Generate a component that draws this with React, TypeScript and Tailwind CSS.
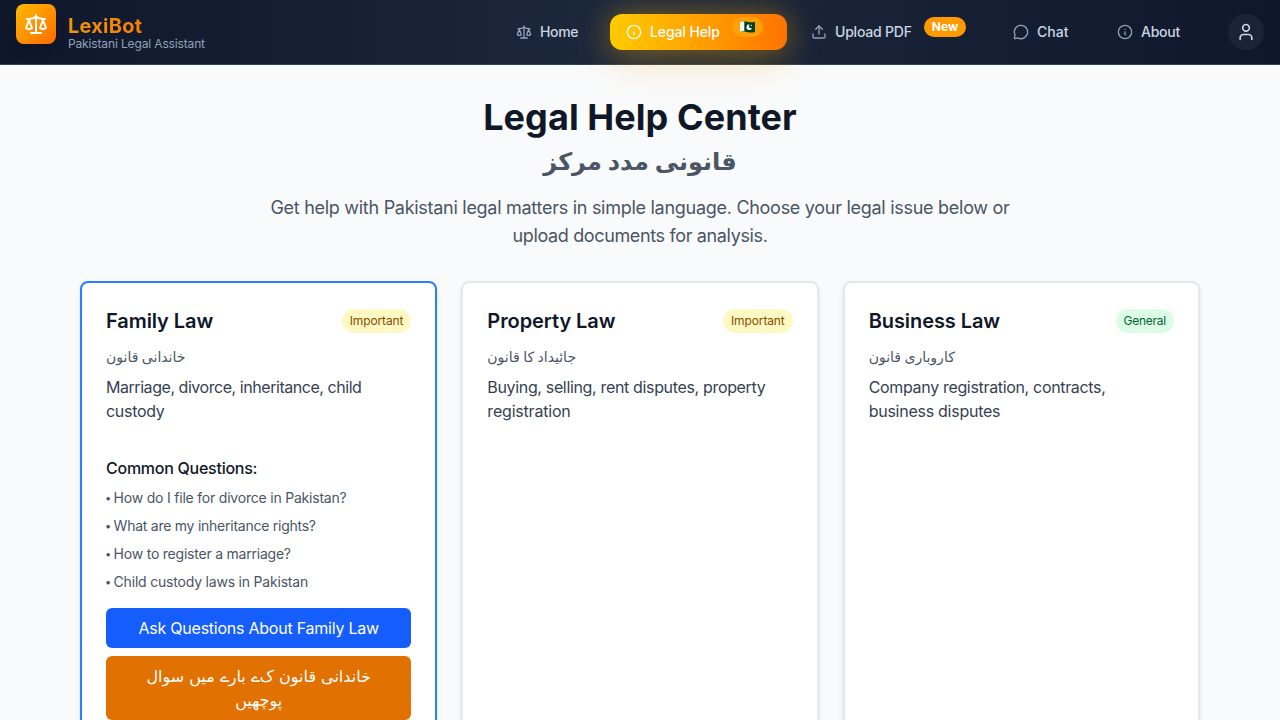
import type { ReactNode } from "react";
import { Info, MessageCircle, Scale, Upload, User } from "lucide-react";

function NavItem({ icon, label, tracking = "", children, className = "" }: { icon: ReactNode; label: string; tracking?: string; children?: ReactNode; className?: string }) {
  return (
    <a className={`flex h-9 items-center rounded-xl pl-4 text-sm font-medium text-slate-300 ${className}`}>
      <span className="mr-2 shrink-0 text-slate-400">{icon}</span>
      <span className={`whitespace-nowrap ${tracking}`}>{label}</span>
      {children}
    </a>
  );
}

function PakistanFlag() {
  return (
    <svg width="15" height="12" viewBox="0 0 15 12">
      <path d="M0 .8Q3.7-.3 7.5.8T15 .8V11Q11.300 12 7.500 11T0 11Z" fill="#01411c" />
      <path d="M0 .8Q2-.1 4.300.2V10.400Q2 10.200 0 11Z" fill="#f3f5f4" />
      <path d="M9.400 3.200A2.900 2.900 0 1 0 12 7.200 2.500 2.500 0 0 1 9.400 3.200Z" fill="#fff" />
      <circle cx="11.200" cy="4.400" r=".7" fill="#fff" />
    </svg>
  );
}

function Header() {
  return (
    <header className="flex h-[65px] border-b border-slate-700 bg-gradient-to-r from-slate-900 via-slate-800 to-slate-900">
      <div className="mt-1 ml-4 flex h-10 w-10 shrink-0 items-center justify-center rounded-lg bg-gradient-to-br from-[#ffb900] to-[#ff6900] text-white shadow-lg">
        <Scale size={24} strokeWidth={2} />
      </div>
      <div className="mt-3 ml-3 w-[432px] shrink-0">
        <div className="w-[137px] bg-gradient-to-r from-[#f0930a] to-[#ff6900] bg-clip-text text-xl leading-7 font-bold tracking-[0.22px] text-transparent">LexiBot</div>
        <div className="-mt-1 text-xs leading-4 tracking-[-0.14px] whitespace-nowrap text-slate-400">Pakistani Legal Assistant</div>
      </div>
      <nav className="mt-3.5 flex items-start">
        <NavItem className="w-[94px]" icon={<Scale size={16} />} label="Home" tracking="tracking-[-0.35px]" />
        <div className="ml-4 w-[177px] rounded-xl bg-gradient-to-r from-[#ffcb00] to-[#ff7200] shadow-[0_0_30px_rgba(255,180,0,0.32),0_10px_40px_rgba(255,165,0,0.22)]">
          <a className="flex h-9 items-center pl-4 text-sm font-medium text-white">
            <Info size={16} className="mr-2 shrink-0" />
            <span className="w-[70px] tracking-[-0.1px] whitespace-nowrap">Legal Help</span>
            <span className="mb-2.5 ml-3 flex h-5 w-[31px] items-center justify-center rounded-full bg-[#ffa005]">
              <PakistanFlag />
            </span>
          </a>
        </div>
        <NavItem className="ml-2 w-[202px]" icon={<Upload size={16} />} label="Upload PDF" tracking="tracking-[-0.2px]">
          <span className="mb-2.5 ml-3 rounded-full bg-[#fe9a00] px-2 text-xs leading-5 font-bold text-white">New</span>
        </NavItem>
        <NavItem className="w-[104px]" icon={<MessageCircle size={16} />} label="Chat" />
        <NavItem className="w-[80px]" icon={<Info size={16} />} label="About" tracking="tracking-[-0.25px]" />
      </nav>
      <button className="mt-3.5 mr-4 ml-auto flex h-9 w-9 items-center justify-center rounded-full bg-[#1a2437] text-slate-300">
        <User size={20} />
      </button>
    </header>
  );
}

function LawCard({ title, urdu, text, badge, selected, children }: { title: string; urdu: string; text: ReactNode; badge: "Important" | "General"; selected?: boolean; children?: ReactNode }) {
  return (
    <article className={`rounded-lg border-2 bg-white p-6 shadow-md ${selected ? "border-[#2b7fff]" : "border-gray-200"}`}>
      <div className="mb-3 flex items-center justify-between">
        <h2 className="text-xl leading-7 font-semibold tracking-[-0.08px] text-gray-900">{title}</h2>
        <span className={`rounded-full px-2 py-1 text-xs leading-4 ${badge === "Important" ? "bg-[#fef9c2] tracking-[-0.12px] text-[#894b00]" : "bg-[#dcfce7] tracking-[-0.26px] text-[#016630]"}`}>{badge}</span>
      </div>
      <p className="mb-2 font-['DejaVu_Sans',sans-serif] text-sm leading-5 [word-spacing:-1px] text-gray-600">{urdu}</p>
      <p className="mb-4 leading-6 text-gray-700">{text}</p>
      {children}
    </article>
  );
}

function Question({ text, tracking }: { text: string; tracking: string }) {
  return (
    <li className="flex">
      <span className="-ml-px w-[8.6px] text-[11px]">•</span>
      <span className={tracking}>{text}</span>
    </li>
  );
}

export default function App() {
  return (
    <div className="h-[720px] overflow-hidden bg-gray-50 font-['Inter','DejaVu_Sans',sans-serif]">
      <Header />
      <main className="px-20 pt-8">
        <div className="mb-[31px] text-center">
          <h1 className="mb-[9px] text-4xl leading-10 font-bold tracking-[0.07px] text-gray-900">Legal Help Center</h1>
          <h2 className="mb-4 font-['DejaVu_Sans',sans-serif] text-2xl leading-8 font-semibold [word-spacing:-2.5px] text-gray-600">قانونی مدد مرکز</h2>
          <p className="text-lg leading-7 text-gray-600">
            <span className="tracking-[-0.28px]">Get help with Pakistani legal matters in simple language. Choose your legal issue below or</span>
            <br />
            <span className="tracking-[-0.36px]">upload documents for analysis.</span>
          </p>
        </div>
        <div className="grid grid-cols-3 gap-6">
          <LawCard
            selected
            title="Family Law"
            urdu="خاندانی قانون"
            badge="Important"
            text={<><span className="tracking-[-0.45px]">Marriage, divorce, inheritance, child</span><br /><span className="tracking-[-0.3px]">custody</span></>}
          >
            <h3 className="mt-[33px] mb-2 leading-6 font-medium tracking-[-0.26px] text-gray-900">Common Questions:</h3>
            <ul className="space-y-2 text-sm leading-5 text-gray-600">
              <Question text="How do I file for divorce in Pakistan?" tracking="tracking-[-0.21px]" />
              <Question text="What are my inheritance rights?" tracking="tracking-[-0.25px]" />
              <Question text="How to register a marriage?" tracking="tracking-[-0.22px]" />
              <Question text="Child custody laws in Pakistan" tracking="tracking-[-0.2px]" />
            </ul>
            <button className="mt-4 h-10 w-full rounded-md bg-[#155dfc] text-base tracking-[-0.24px] text-white">Ask Questions About Family Law</button>
            <button className="mt-2 h-16 w-full rounded-md bg-[#e17100] px-4 pt-0.5 font-['DejaVu_Sans',sans-serif] leading-6 [word-spacing:-0.1px] text-white">
              {"خاندانی قانون ک\u200cے بارے میں سوال"}
              <br />
              پوچھیں
            </button>
          </LawCard>
          <LawCard
            title="Property Law"
            urdu="جائیداد کا قانون"
            badge="Important"
            text={<><span className="tracking-[-0.34px]">Buying, selling, rent disputes, property</span><br /><span className="tracking-[-0.2px]">registration</span></>}
          />
          <LawCard
            title="Business Law"
            urdu="کاروباری قانون"
            badge="General"
            text={<><span className="tracking-[-0.33px]">Company registration, contracts,</span><br /><span className="tracking-[-0.26px]">business disputes</span></>}
          />
        </div>
      </main>
    </div>
  );
}
